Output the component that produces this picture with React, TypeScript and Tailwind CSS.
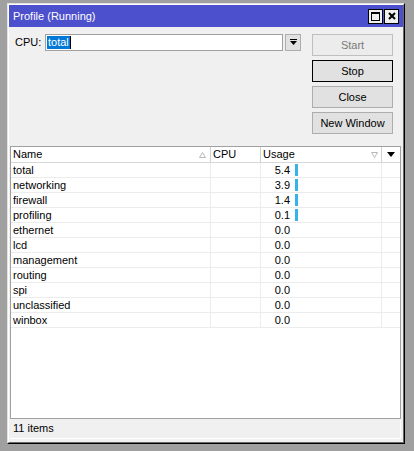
const rows: [string, string][] = [
  ["total", "5.4"],
  ["networking", "3.9"],
  ["firewall", "1.4"],
  ["profiling", "0.1"],
  ["ethernet", "0.0"],
  ["lcd", "0.0"],
  ["management", "0.0"],
  ["routing", "0.0"],
  ["spi", "0.0"],
  ["unclassified", "0.0"],
  ["winbox", "0.0"],
];

function Btn({ label, disabled, focused }: { label: string; disabled?: boolean; focused?: boolean }) {
  return (
    <div
      className={
        "h-[22px] w-[81px] flex items-center justify-center border " +
        (focused
          ? "border-black bg-[#e1e1e1] text-black"
          : disabled
          ? "border-[#bfbfbf] bg-[#ececec] text-[#7a7a7a]"
          : "border-[#adadad] bg-[#e1e1e1] text-black")
      }
    >
      {label}
    </div>
  );
}

export default function App() {
  return (
    <div className="w-[414px] h-[451px] bg-[#a0a0a0] pt-[3px] pl-[7px] font-['Liberation_Sans',Arial,sans-serif] text-[11px] leading-none text-black">
      <div className="w-[398px] h-[441px] border border-t-[#e3e3e3] border-l-[#e3e3e3] border-r-black border-b-black">
        <div className="h-full flex flex-col bg-[#f0f0f0] border border-t-white border-l-white border-r-[#696969] border-b-[#696969]">
          {/* Title bar */}
          <div className="h-[22px] shrink-0 bg-[#4d50cc] flex items-center pl-[4px] pr-[4px] text-white">
            <span className="flex-1 text-[11px]">Profile (Running)</span>
            <div className="flex gap-[1px]">
              <div className="w-[15px] h-[15px] border border-black bg-[#f0f0f0] flex items-center justify-center">
                <svg width="9" height="9" viewBox="0 0 9 9">
                  <rect x="0.5" y="0.5" width="8" height="8" fill="none" stroke="black" strokeWidth="1" />
                  <rect x="0" y="0" width="9" height="2" fill="black" />
                </svg>
              </div>
              <div className="w-[15px] h-[15px] border border-black bg-[#f0f0f0] flex items-center justify-center">
                <svg width="8" height="8" viewBox="0 0 8 8">
                  <path d="M1 1 L7 7 M7 1 L1 7" stroke="black" strokeWidth="2" />
                </svg>
              </div>
            </div>
          </div>

          {/* Top section */}
          <div className="h-[119px] shrink-0 flex pl-[6px] pt-[7px]">
            <div className="flex items-start">
              <div className="w-[30px] h-[17px] flex items-center">CPU:</div>
              <div className="w-[238px] h-[17px] border border-[#a0a0a0] bg-white flex items-center pl-[1px]">
                <span className="bg-[#0078d7] text-white h-[13px] flex items-center px-[1px]">total</span>
                <span className="w-[1px] h-[13px] bg-black"></span>
              </div>
              <div className="ml-[2px] w-[16px] h-[17px] border border-[#adadad] bg-[#e1e1e1] flex items-center justify-center">
                <svg width="7" height="7" viewBox="0 0 7 7">
                  <rect x="0" y="0" width="7" height="1" fill="black" />
                  <path d="M0 2 L7 2 L3.5 6 Z" fill="black" />
                </svg>
              </div>
            </div>
            <div className="ml-[11px] flex flex-col gap-[4px]">
              <Btn label="Start" disabled />
              <Btn label="Stop" focused />
              <Btn label="Close" />
              <Btn label="New Window" />
            </div>
          </div>

          {/* Table */}
          <div className="flex-1 ml-[1px] w-[391px] border border-[#a0a0a0] bg-white flex flex-col overflow-hidden">
            <div className="h-[16px] shrink-0 flex border-b border-[#d8d8d8]">
              <div className="w-[200px] border-r border-[#d0d0d0] flex items-center justify-between pl-[2px] pr-[4px]">
                <span>Name</span>
                <svg width="7" height="6" viewBox="0 0 7 6">
                  <path d="M0.5 5.5 L3.5 0.5 L6.5 5.5 Z" fill="none" stroke="#b8b8b8" strokeWidth="1" />
                </svg>
              </div>
              <div className="w-[50px] border-r border-[#d0d0d0] flex items-center pl-[2px]">CPU</div>
              <div className="w-[121px] border-r border-[#d0d0d0] flex items-center justify-between pl-[2px] pr-[3px]">
                <span>Usage</span>
                <svg width="7" height="6" viewBox="0 0 7 6">
                  <path d="M0.5 0.5 L6.5 0.5 L3.5 5.5 Z" fill="none" stroke="#b8b8b8" strokeWidth="1" />
                </svg>
              </div>
              <div className="flex-1 flex items-center justify-center">
                <svg width="8" height="5" viewBox="0 0 8 5">
                  <path d="M0 0 L8 0 L4 5 Z" fill="black" />
                </svg>
              </div>
            </div>
            {rows.map(([name, val]) => (
              <div key={name} className="h-[15px] shrink-0 flex border-b border-[#ececec]">
                <div className="w-[200px] border-r border-[#ececec] flex items-center pl-[2px]">{name}</div>
                <div className="w-[50px] border-r border-[#ececec]"></div>
                <div className="w-[121px] border-r border-[#ececec] flex items-center">
                  <span className="w-[29px] text-right">{val}</span>
                  {val !== "0.0" && <span className="ml-[5px] w-[3px] h-[12px] bg-[#36b3e8]"></span>}
                </div>
                <div className="flex-1"></div>
              </div>
            ))}
          </div>

          {/* Status */}
          <div className="h-[20px] shrink-0 mb-[3px] ml-[1px] w-[391px] flex items-center pl-[3px] border-r border-b border-white">
            11 items
          </div>
        </div>
      </div>
    </div>
  );
}
